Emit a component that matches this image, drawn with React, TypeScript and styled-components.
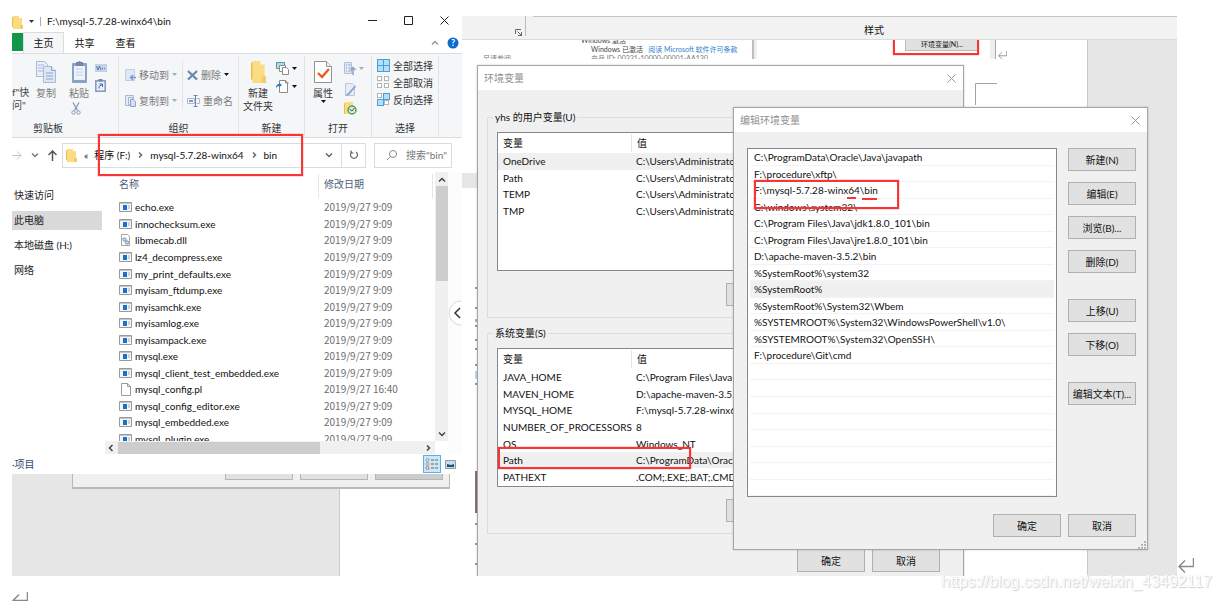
import React from "react";
import styled, { createGlobalStyle } from "styled-components";

const GlobalStyle = createGlobalStyle`
  * { box-sizing: border-box; }
  body { margin: 0; background: #fff; color: #101010; font: 10px/16px Lato, "Noto Sans CJK SC", sans-serif; overflow: hidden; }
  button, input, table { font: inherit; color: inherit; }
  button { padding: 0; border: 0; background: none; }
  svg { display: block; flex: none; }
`;

/* ---------- page ---------- */
const Page = styled.main`
  position: relative;
  padding: 16px 45px 0 12px;
  min-height: 601px;
`;
const Scenes = styled.div`
  display: flex;
  height: 560px;
`;
const LeftScene = styled.section`
  position: relative;
  flex: none;
  width: 450px;
`;
const RightScene = styled.section`
  position: relative;
  flex: 1;
  min-width: 0;
  overflow: hidden;
  display: flex;
  flex-direction: column;
`;
const Mark = styled.div<{ $x: number; $y: number; $w: number; $h: number }>`
  position: absolute;
  z-index: 5;
  left: ${(p) => p.$x}px;
  top: ${(p) => p.$y}px;
  width: ${(p) => p.$w}px;
  height: ${(p) => p.$h}px;
  border: 2px solid #f93434;
  box-shadow: 0 0 1px #f93434;
  pointer-events: none;
`;
const Pinned = styled.div<{ $x: number; $y: number }>`
  position: absolute;
  left: ${(p) => p.$x}px;
  top: ${(p) => p.$y}px;
`;
const Watermark = styled.div`
  position: absolute;
  z-index: 9;
  right: 10px;
  top: 572px;
  font: 16px/20px "Liberation Sans", sans-serif;
  color: #fff;
  text-shadow: 1px 1px 1px #d0d0d0, 0 0 1px #d8d8d8;
  white-space: nowrap;
`;

/* ---------- explorer ---------- */
const Explorer = styled.div`
  height: 458px;
  background: #fff;
  display: flex;
  flex-direction: column;
  overflow: hidden;
`;
const TitleBar = styled.header`
  display: flex;
  align-items: flex-start;
  height: 17px;
  line-height: 10px;
`;
const Gap = styled.span`
  flex: none;
  width: 8px;
`;
const QuickAccess = styled.div`
  display: flex;
  align-items: center;
  gap: 6px;
  height: 10px;
  padding: 0 6px;
`;
const TitleText = styled.h1`
  flex: 1;
  margin: 0;
  font: inherit;
`;
const WindowButton = styled.button`
  width: 36px;
  height: 10px;
  display: flex;
  justify-content: center;
`;
const Tabs = styled.nav`
  display: flex;
  align-items: center;
  height: 21px;
  border-bottom: 1px solid #dcdde0;
`;
const FileTab = styled.button`
  width: 11px;
  height: 18px;
  align-self: flex-start;
  background: #12974a;
`;
const Tab = styled.button<{ $active?: boolean }>`
  width: 41px;
  height: 21px;
  line-height: 18px;
  ${(p) => p.$active && "background:#f5f6f7;border:1px solid #dcdde0;border-bottom:0;"}
`;
const TabEnd = styled.div`
  margin-left: auto;
  margin-right: 3px;
  display: flex;
  align-items: center;
  gap: 8px;
`;
const Ribbon = styled.div`
  display: flex;
  height: 85px;
  background: #f5f6f7;
  border-bottom: 1px solid #dcdde0;
  color: #333;
`;
const Group = styled.section<{ $w: number }>`
  width: ${(p) => p.$w}px;
  margin: 2px 0 0;
  border-right: 1px solid #e2e3e5;
  display: flex;
  flex-direction: column;
  overflow: hidden;
`;
const GroupBody = styled.div<{ $pl?: number; $pt?: number; $gap?: number }>`
  flex: 1;
  display: flex;
  padding: ${(p) => p.$pt ?? 5}px 0 0 ${(p) => p.$pl ?? 0}px;
  gap: ${(p) => p.$gap ?? 0}px;
`;
const GroupLabel = styled.div<{ $pr?: number }>`
  height: 18px;
  line-height: 18px;
  padding-right: ${(p) => p.$pr ?? 0}px;
  text-align: center;
`;
const BigButton = styled.button<{ $w?: number; $dim?: boolean }>`
  width: ${(p) => p.$w ?? 30}px;
  display: flex;
  flex-direction: column;
  align-items: center;
  align-self: flex-start;
  line-height: 13px;
  white-space: pre;
  color: ${(p) => (p.$dim ? "#7a7a7a" : "#333")};
  svg:first-child { margin-bottom: 4px; }
`;
const Stack = styled.div<{ $gap: number; $pt?: number; $line?: boolean }>`
  display: flex;
  flex-direction: column;
  align-self: flex-start;
  gap: ${(p) => p.$gap}px;
  padding-top: ${(p) => p.$pt ?? 0}px;
  ${(p) => p.$line && "border-right:1px solid #e2e3e5;padding-right:5px;"}
`;
const SmallButton = styled.button<{ $dim?: boolean }>`
  display: flex;
  align-items: center;
  gap: 3px;
  height: 16px;
  line-height: 16px;
  color: ${(p) => (p.$dim ? "#7a7a7a" : "#333")};
`;
const Cut = styled.div`
  padding-left: 8px;
`;
const QuickPin = styled.div`
  width: 17px;
  padding-top: 25px;
  line-height: 13px;
  white-space: nowrap;
  color: #444;
`;
const AddressRow = styled.div`
  display: flex;
  align-items: center;
  height: 34px;
  padding-right: 10px;
`;
const NavButtons = styled.div`
  width: 50px;
  display: flex;
  align-items: center;
  gap: 9px;
`;
const AddressBox = styled.div`
  width: 304px;
  height: 25px;
  border: 1px solid #dcdcdc;
  display: flex;
  align-items: center;
  padding-left: 3px;
`;
const Crumbs = styled.div`
  flex: 1;
  display: flex;
  gap: 6px;
  align-items: center;
  padding-left: 7px;
  white-space: nowrap;
`;
const Refresh = styled.button`
  width: 24px;
  height: 23px;
  display: grid;
  place-items: center;
  border-left: 1px solid #dcdcdc;
`;
const SearchBox = styled.label`
  margin-left: auto;
  width: 78px;
  height: 25px;
  border: 1px solid #dcdcdc;
  display: flex;
  align-items: center;
  gap: 9px;
  padding-left: 12px;
  input { width: 46px; border: 0; padding: 0; outline: 0; background: none; }
  input::placeholder { color: #777; opacity: 1; }
`;
const ExplorerBody = styled.div`
  display: flex;
  height: 282px;
`;
const Sidebar = styled.nav`
  width: 90px;
  padding-top: 14px;
  display: flex;
  flex-direction: column;
  gap: 6px;
`;
const SideLink = styled.a<{ $on?: boolean }>`
  height: 19px;
  line-height: 18px;
  padding-left: 2px;
  color: #222;
  text-decoration: none;
  background: ${(p) => (p.$on ? "#d9d9d9" : "transparent")};
`;
const FilePane = styled.div`
  width: 346px;
  padding-left: 3px;
  display: flex;
  flex-direction: column;
`;
const FileArea = styled.div`
  display: flex;
  height: 269px;
`;
const FileTable = styled.table`
  flex: 1;
  display: block;
  height: 269px;
  overflow: hidden;
  thead, tbody { display: flex; flex-direction: column; }
  tr { display: flex; flex: 1; align-items: center; padding-left: 14px; }
  thead { height: 27px; color: #4c607a; }
  th { font-weight: normal; text-align: left; padding: 0; height: 24px; line-height: 20px; }
  tbody { height: 248px; }
  td { padding: 0; display: flex; align-items: center; gap: 3px; white-space: nowrap; }
  th:first-child, td:first-child { width: 199px; }
  th + th { border-left: 1px solid #e5e5e5; border-right: 1px solid #e5e5e5; width: 115px; padding-left: 5px; }
  td + td { padding-left: 6px; color: #6d6d6d; font-family: "Noto Sans CJK SC", sans-serif; }
`;
const VScroll = styled.div`
  width: 13px;
  padding: 4px 0 3px;
  background: #f0f0f0;
  display: flex;
  flex-direction: column;
  align-items: center;
`;
const VThumb = styled.div`
  width: 12px;
  height: 95px;
  margin: 2px 0 auto;
  background: #cdcdcd;
`;
const HScroll = styled.div`
  width: 330px;
  height: 13px;
  background: #f0f0f0;
  display: flex;
  align-items: center;
  padding: 0 3px 0 2px;
`;
const HThumb = styled.div`
  width: 202px;
  height: 12px;
  margin: 0 auto 0 3px;
  background: #cdcdcd;
`;
const SideStrip = styled.div`
  flex: 1;
  display: flex;
  align-items: center;
  background: #fcfcfc;
  overflow: hidden;
`;
const StatusBar = styled.footer`
  height: 20px;
  padding-right: 3px;
  display: flex;
  align-items: center;
  color: #33496b;
  span { flex: 1; line-height: 18px; }
`;
const ViewButton = styled.button<{ $on?: boolean }>`
  width: 18px;
  height: 18px;
  display: grid;
  place-items: center;
  ${(p) => p.$on && "background:#cce8f6;border:1px solid #58b4df;"}
`;
const Backdrop = styled.div`
  position: relative;
  width: 328px;
  height: 102px;
  background: #e6e6e6;
  border-right: 1px solid #c9c9c9;
`;
const DialogEdge = styled.div`
  position: absolute;
  left: 60px;
  top: 0;
  width: 378px;
  height: 15px;
  background: #f0f0f0;
  border: solid #b9b9b9;
  border-width: 0 1px 2px;
  display: flex;
  justify-content: flex-end;
  gap: 7px;
  padding-right: 6px;
`;
const ButtonEdge = styled.div<{ $on?: boolean }>`
  width: 68px;
  height: 6px;
  background: ${(p) => (p.$on ? "#cccccc" : "#e1e1e1")};
  border: solid #b5b5b5;
  border-width: 0 1px 1px;
`;

/* ---------- document behind the dialogs ---------- */
const StyleStrip = styled.div`
  flex: none;
  height: 24px;
  background: #f2f2f2;
  border-bottom: 1px solid #dadada;
  display: flex;
`;
const StripLeft = styled.div`
  width: 64px;
  height: 20px;
  border-right: 1px solid #bdbdbd;
  display: flex;
  align-items: flex-end;
  justify-content: flex-end;
  padding-right: 3px;
`;
const StripMain = styled.div`
  flex: 1;
  margin-left: 7px;
  padding-left: 331px;
  padding-top: 3px;
  line-height: 20px;
  border-top: 1px solid #c6c6c6;
`;
const DocArea = styled.div`
  position: relative;
  flex: 1;
  overflow: hidden;
  background: linear-gradient(#e6e6e6, #e6e6e6) right / 90px 100% no-repeat #fff;
`;
const DocEdge = styled.div`
  height: 100%;
  margin-right: 89px;
  border-right: 1px solid #c9c9c9;
`;
const TinyLine = styled(Pinned)`
  height: 8px;
  font-size: 7px;
  line-height: 8px;
  white-space: pre;
  color: #444;
  a { color: #2f7fd0; text-decoration: none; }
`;
const PartLine = styled(TinyLine)`
  height: 5px;
  overflow: hidden;
  color: #777;
`;
const TinyButton = styled.button`
  position: absolute;
  left: 443px;
  top: -4px;
  width: 74px;
  height: 15px;
  background: #e1e1e1;
  border: 1px solid #bbb;
  font-size: 7px;
  line-height: 15px;
`;
const Bar = styled.div<{ $x: number; $y: number; $w: number; $h: number; $c: string }>`
  position: absolute;
  left: ${(p) => p.$x}px;
  top: ${(p) => p.$y}px;
  width: ${(p) => p.$w}px;
  height: ${(p) => p.$h}px;
  background: ${(p) => p.$c};
`;
const Underline = styled(Bar)`
  z-index: 5;
`;

/* ---------- dialogs ---------- */
const Dialog = styled.div<{ $x: number; $y: number; $w: number; $h: number }>`
  position: absolute;
  left: ${(p) => p.$x}px;
  top: ${(p) => p.$y}px;
  width: ${(p) => p.$w}px;
  height: ${(p) => p.$h}px;
  background: #f0f0f0;
  border: 1px solid #a5a5a5;
  box-shadow: 0 0 2px rgba(0, 0, 0, 0.2);
`;
const DialogTitle = styled.header`
  height: 24px;
  padding: 0 7px 0 6px;
  display: flex;
  align-items: center;
  justify-content: space-between;
  line-height: 20px;
  background: #fff;
  color: #8f8f8f;
`;
const PushButton = styled.button`
  flex: none;
  width: 68px;
  height: 23px;
  border: 1px solid #b0b0b0;
  background: #e1e1e1;
  color: #111;
  line-height: 20px;
`;
const EnvBody = styled.div`
  padding: 19px 9px 0;
  display: flex;
  flex-direction: column;
  gap: 7px;
`;
const VarGroup = styled.fieldset`
  margin: 0;
  height: 209px;
  padding: 7px 9px 0;
  border: 1px solid #dcdcdc;
  min-width: 0;
  display: flex;
  flex-direction: column;
  legend { margin-left: -4px; padding: 0 2px; line-height: 16px; }
`;
const VarTable = styled.table`
  display: block;
  flex: none;
  height: 139px;
  background: #fff;
  border: 1px solid #828790;
  thead, tbody { display: flex; flex-direction: column; }
  tr { display: flex; flex: 1; align-items: center; }
  thead { height: 20px; }
  th, td { padding: 0 0 0 5px; text-align: left; font-weight: normal; white-space: nowrap; }
  th { line-height: 18px; }
  th:first-child, td:first-child { width: 133px; }
  th + th { border-left: 1px solid #e5e5e5; }
`;
const VarBody = styled.tbody<{ $h: number }>`
  height: ${(p) => p.$h}px;
`;
const VarRow = styled.tr<{ $on?: boolean }>`
  background: ${(p) => (p.$on ? "#f0f0f0" : "transparent")};
`;
const GroupButtons = styled.div`
  display: flex;
  justify-content: flex-end;
  padding: 12px 150px 0 0;
`;
const DialogActions = styled.div`
  display: flex;
  justify-content: flex-end;
  gap: 7px;
  padding: 8px 14px 0 0;
`;
const EditActions = styled(DialogActions)`
  padding: 0 11px 0 0;
`;
const EditBody = styled.div`
  height: 382px;
  padding: 16px 11px 0 13px;
  display: flex;
  gap: 11px;
`;
const PathList = styled.ul`
  flex: 1;
  height: 349px;
  margin: 0;
  padding: 0;
  list-style: none;
  background: #fff;
  border: 1px solid #828790;
  overflow: hidden;
  display: flex;
  flex-direction: column;
`;
const PathRow = styled.li<{ $on?: boolean }>`
  flex: 1;
  min-height: 0;
  margin: 0 2px;
  padding-left: 4px;
  border-bottom: 1px solid #f3f3f3;
  background: ${(p) => (p.$on ? "#f0f0f0" : "transparent")};
`;
const SideButtons = styled.div`
  display: flex;
  flex-direction: column;
  gap: 11px;
  ${PushButton}:nth-child(5), ${PushButton}:nth-child(7) { margin-top: 15px; }
`;

/* ---------- icons ---------- */
const Folder = ({ w = 11, h = 13 }: { w?: number; h?: number }) => (
  <svg width={w} height={h} viewBox="0 0 11 13" preserveAspectRatio="none">
    <path d="M0 1h6v10H0z" fill="#e8bd4e" />
    <path d="M1 0h6v2h3v11H1z" fill="#fbdc82" />
    <path d="M8 9h3v4H8z" fill="#f3cd65" />
  </svg>
);
const Caret = ({ c = "#333" }: { c?: string }) => (
  <svg width="5" height="3"><path d="M0 0h5L2.5 3z" fill={c} /></svg>
);
const Close = ({ c = "#999" }: { c?: string }) => (
  <svg width="9" height="9"><path d="M.5.5l8 8M8.5.5l-8 8" stroke={c} fill="none" /></svg>
);
const Chevron = ({ d, c = "#444" }: { d: "up" | "down" | "left" | "right"; c?: string }) => {
  const paths = { up: "M1 5.500l3-3 3 3", down: "M1 2.500l3 3 3-3", left: "M5.500 1l-3 3 3 3", right: "M3 1.500l2.500 2.500-2.500 2.500" };
  return <svg width="8" height="8"><path d={paths[d]} fill="none" stroke={c} strokeWidth="1.500" /></svg>;
};
const CopyIcon = () => (
  <svg width="22" height="22" stroke="#a9b9d6" fill="#e9eff9">
    <path d="M1.500.5h8l3 3v12h-11z" /><path d="M3 4h6M3 7h7M3 10h7" />
    <path d="M8.500 5.500h8l4 4v12h-12z" fill="#dce6f5" /><path d="M16.500 5.500v4h4M11 12h7M11 15h7M11 18h7" stroke="#8ea4cb" />
  </svg>
);
const CopyToIcon = () => (
  <svg width="11" height="12" fill="#e3ebf7" stroke="#a9b9d6"><path d="M.5.5h8v10h-8z" /><path d="M3.500 2.500h4v7h-4z" /><path d="M5.500 4.500h3l2 2v5h-5z" fill="#d5e0f1" stroke="#8ea4cb" /></svg>
);
const PasteIcon = () => (
  <svg width="17" height="22"><rect x="1" y="2" width="15" height="20" rx="1" fill="#8ba1c6" /><path d="M3 5h11v14H3z" fill="#eef3fb" /><path d="M5 8h7M5 11h7M5 14h7" stroke="#c5d2e8" /><path d="M5 1h2q1.500-2 3 0h2v4H5z" fill="#7187ae" /></svg>
);
const ScissorsIcon = () => (
  <svg width="10" height="13" fill="none" stroke="#8298bf"><path d="M2 .5l4.500 8M8 .5l-4.500 8" strokeWidth="1.300" /><circle cx="2.500" cy="10.500" r="1.700" /><circle cx="7.500" cy="10.500" r="1.700" /></svg>
);
const PathIcon = () => (
  <svg width="12" height="8"><rect width="12" height="8" fill="#c3d0e6" /><path d="M1.500 2l1.500 4 1.500-4 1.500 4M7 4.500h1M9 4.500h1" stroke="#5f7caf" fill="none" /></svg>
);
const ShortcutIcon = () => (
  <svg width="11" height="13"><rect x=".8" y="1.800" width="9.400" height="10.400" fill="#eaf0fa" stroke="#8298bf" strokeWidth="1.500" /><path d="M3.500 0h4v2.500h-4z" fill="#7187ae" /><path d="M4 9.500V7.500L7 5.500M4.500 5h3v3" stroke="#3e66a8" fill="none" /></svg>
);
const MoveIcon = () => (
  <svg width="11" height="12"><path d="M.5.5h9v11h-9z" fill="#dfe8f5" stroke="#c0cde2" /><path d="M11 8.500H5M8 6L5.500 8.500 8 11" stroke="#7f9ac8" strokeWidth="1.500" fill="none" /></svg>
);
const DeleteIcon = () => (
  <svg width="11" height="10"><path d="M1 1l9 8.500M10 1L1 9.500" stroke="#6784b5" strokeWidth="2.200" /></svg>
);
const RenameIcon = () => (
  <svg width="13" height="12" fill="none"><path d="M.5 3.500h7v5h-7zM9.500 3.500h3v5h-3" stroke="#a9b9d6" /><path d="M2 6h4" stroke="#7f9ac8" strokeWidth="2" /><path d="M6.500.5h4M8.500.5v11M6.500 11.500h4" stroke="#6c86b3" /></svg>
);
const NewItemIcon = () => (
  <svg width="13" height="13"><path d="M.5.5h8v6h-8z" fill="#b7dbe6" stroke="#5795a8" /><path d="M3.500 3.500h6v6h-6z" fill="#fff" stroke="#8c8c8c" /><path d="M6.500 5.500h4l2 2v5h-6z" fill="#fff" stroke="#8c8c8c" /></svg>
);
const EasyIcon = () => (
  <svg width="13" height="13"><path d="M3.500.5h6l2 2v10h-8z" fill="#fff" stroke="#8c8c8c" /><path d="M9.500 0v3h3" stroke="#8c8c8c" fill="none" /><path d="M0 8q0-4 3-4V2.500L6 5 3 7.500V6Q1.500 6 0 8z" fill="#2d7fc4" /></svg>
);
const PropertiesIcon = () => (
  <svg width="18" height="22"><path d="M.5.5h12l5 5v16H.5z" fill="#fff" stroke="#929292" /><path d="M12.500.5v5h5" fill="#eee" stroke="#929292" /><path d="M4 12l4 4 7-8" stroke="#ee5a1c" strokeWidth="2.400" fill="none" /></svg>
);
const OpenIcon = () => (
  <svg width="12" height="13"><path d="M.5.5h7v11h-7z" fill="#e2e9f5" stroke="#afbed9" /><path d="M2 3h1M2 6h1M2 9h1M4.500 3h2M4.500 6h2M4.500 9h2" stroke="#7f9ac8" /><path d="M9 13V6M6.500 8L9 5.500 11.500 8" stroke="#8ba1c6" strokeWidth="1.500" fill="none" /></svg>
);
const EditIcon = () => (
  <svg width="12" height="13"><path d="M1.500.5h7l2 2v10h-9z" fill="#e6edf8" stroke="#b9c7df" /><path d="M11.500 3l-7 8-2 1" stroke="#8ba1c6" strokeWidth="1.800" fill="none" /></svg>
);
const HistoryIcon = () => (
  <svg width="13" height="13"><path d="M0 1h4v11H0z" fill="#e8bd4e" /><path d="M1 0h8v12H1z" fill="#fbdc82" /><circle cx="8" cy="8" r="4" fill="#d5ead6" stroke="#55a25c" strokeWidth="1.500" /><path d="M5.500 7L8 9l2.500-3" stroke="#555" fill="none" /></svg>
);
const GridIcon = ({ on }: { on: boolean[] }) => (
  <svg width="13" height="13">
    {on.map((v, i) => (
      <rect key={i} x={(i % 2) * (v ? 6 : 7) + 0.5} y={Math.floor(i / 2) * (v ? 6 : 7) + 0.5} width={v ? 6 : 4} height={v ? 6 : 4} fill={v ? "#b4dff9" : "#fff"} stroke={v ? "#4a9ed9" : "#b3b3b3"} />
    ))}
  </svg>
);
const ExeIcon = () => (
  <svg width="13" height="10"><path d="M.5.5h12v9H.5z" fill="#f6f6f6" stroke="#9a9a9a" /><path d="M1 1h11v1H1z" fill="#c4c4c4" /><path d="M4 3h4v5H4z" fill="#1273d0" /><path d="M9 4h2M9 6h2" stroke="#9fb4cc" /></svg>
);
const DllIcon = () => (
  <svg width="13" height="12"><path d="M2.500.5h6l2 2v9h-8z" fill="#fff" stroke="#a5a5a5" /><circle cx="5.500" cy="5.500" r="1.700" fill="#ccd9e6" stroke="#7d94ab" /><circle cx="8" cy="8.500" r="1.700" fill="#ccd9e6" stroke="#7d94ab" /></svg>
);
const FileIcon = () => (
  <svg width="13" height="13"><path d="M2.500.5h6l3 3v9h-9z" fill="#fff" stroke="#9a9a9a" /><path d="M8.500.5v3h3" fill="none" stroke="#9a9a9a" /></svg>
);
const ReturnMark = ({ s = 16 }: { s?: number }) => (
  <svg width={s} height={s} viewBox="0 0 16 16"><path d="M15.500 0v8.500H1M7 2.500l-6 6 6 6" fill="none" stroke="#8a8a8a" strokeWidth="1.500" /></svg>
);

/* ---------- data ---------- */
const files = [
  "echo.exe", "innochecksum.exe", "libmecab.dll", "lz4_decompress.exe", "my_print_defaults.exe",
  "myisam_ftdump.exe", "myisamchk.exe", "myisamlog.exe", "myisampack.exe", "mysql.exe",
  "mysql_client_test_embedded.exe", "mysql_config.pl", "mysql_config_editor.exe", "mysql_embedded.exe", "mysql_plugin.exe",
];
const userVars = [["OneDrive", "C:\\Users\\Administrator"], ["Path", "C:\\Users\\Administrator"], ["TEMP", "C:\\Users\\Administrator"], ["TMP", "C:\\Users\\Administrator"]];
const systemVars = [
  ["JAVA_HOME", "C:\\Program Files\\Java"], ["MAVEN_HOME", "D:\\apache-maven-3.5.2"], ["MYSQL_HOME", "F:\\mysql-5.7.28-winx64"],
  ["NUMBER_OF_PROCESSORS", "8"], ["OS", "Windows_NT"], ["Path", "C:\\ProgramData\\Oracle"], ["PATHEXT", ".COM;.EXE;.BAT;.CMD"],
];
const paths = [
  "C:\\ProgramData\\Oracle\\Java\\javapath", "F:\\procedure\\xftp\\", "F:\\mysql-5.7.28-winx64\\bin", "C:\\windows\\system32\\",
  "C:\\Program Files\\Java\\jdk1.8.0_101\\bin", "C:\\Program Files\\Java\\jre1.8.0_101\\bin", "D:\\apache-maven-3.5.2\\bin",
  "%SystemRoot%\\system32", "%SystemRoot%", "%SystemRoot%\\System32\\Wbem", "%SYSTEMROOT%\\System32\\WindowsPowerShell\\v1.0\\",
  "%SYSTEMROOT%\\System32\\OpenSSH\\", "F:\\procedure\\Git\\cmd", "", "", "", "", "", "", "", "",
];
const paragraphTicks = [247, 267, 285, 299, 308, 324, 343, 483, 503, 523];

const fileIcon = (name: string) => (name.endsWith(".exe") ? <ExeIcon /> : name.endsWith(".dll") ? <DllIcon /> : <FileIcon />);

function Variables({ title, rows, selected, bodyHeight }: { title: string; rows: string[][]; selected: number; bodyHeight: number }) {
  return (
    <VarGroup>
      <legend>{title}</legend>
      <VarTable>
        <thead><tr><th>变量</th><th>值</th></tr></thead>
        <VarBody $h={bodyHeight}>
          {rows.map(([k, v], i) => <VarRow key={k} $on={i === selected}><td>{k}</td><td>{v}</td></VarRow>)}
        </VarBody>
      </VarTable>
      <GroupButtons><PushButton aria-label="新建" /></GroupButtons>
    </VarGroup>
  );
}

function ExplorerWindow() {
  return (
    <Explorer>
      <TitleBar>
        <Folder />
        <QuickAccess><Caret /><svg width="1" height="9"><path d="M0 0h1v9H0z" fill="#aaa" /></svg></QuickAccess>
        <TitleText>F:\mysql-5.7.28-winx64\bin</TitleText>
        <WindowButton aria-label="最小化"><svg width="9" height="9"><path d="M0 4.500h9" stroke="#222" /></svg></WindowButton>
        <WindowButton aria-label="最大化"><svg width="9" height="9"><path d="M.5.5h8v8h-8z" stroke="#222" fill="none" /></svg></WindowButton>
        <WindowButton aria-label="关闭"><Close c="#222" /></WindowButton>
      </TitleBar>
      <Tabs>
        <FileTab aria-label="文件" /><Tab $active>主页</Tab><Tab>共享</Tab><Tab>查看</Tab>
        <TabEnd>
          <Chevron d="up" c="#999" />
          <svg width="12" height="12"><circle cx="6" cy="6" r="5.500" fill="#0a6ccc" /><text x="6" y="9" textAnchor="middle" fontSize="9" fontWeight="bold" fill="#fff">?</text></svg>
        </TabEnd>
      </Tabs>
      <Ribbon>
        <Group $w={107}>
          <GroupBody>
            <QuickPin>f"快<br />问"</QuickPin>
            <BigButton $w={34} $dim><CopyIcon />复制</BigButton>
            <Stack $gap={2}><BigButton $w={32} $dim><PasteIcon />粘贴</BigButton><Cut><ScissorsIcon /></Cut></Stack>
            <Stack $gap={7} $pt={3}><PathIcon /><ShortcutIcon /></Stack>
          </GroupBody>
          <GroupLabel $pr={34}>剪贴板</GroupLabel>
        </Group>
        <Group $w={120}>
          <GroupBody $pl={6} $gap={4}>
            <Stack $gap={10} $pt={6} $line>
              <SmallButton $dim><MoveIcon />移动到 <Caret c="#aaa" /></SmallButton>
              <SmallButton $dim><CopyToIcon />复制到 <Caret c="#aaa" /></SmallButton>
            </Stack>
            <Stack $gap={10} $pt={6}>
              <SmallButton $dim><DeleteIcon />删除 <Caret c="#111" /></SmallButton>
              <SmallButton $dim><RenameIcon />重命名</SmallButton>
            </Stack>
          </GroupBody>
          <GroupLabel>组织</GroupLabel>
        </Group>
        <Group $w={66}>
          <GroupBody $pl={1}>
            <BigButton $w={36}><Folder w={15} h={22} />{"新建\n文件夹"}</BigButton>
            <Stack $gap={2}>
              <SmallButton aria-label="新建项目"><NewItemIcon /><Caret c="#111" /></SmallButton>
              <SmallButton aria-label="轻松访问"><EasyIcon /><Caret c="#111" /></SmallButton>
            </Stack>
          </GroupBody>
          <GroupLabel>新建</GroupLabel>
        </Group>
        <Group $w={67}>
          <GroupBody $pl={1} $gap={4}>
            <BigButton $w={34}><PropertiesIcon />属性<Caret c="#111" /></BigButton>
            <Stack $gap={6}>
              <SmallButton aria-label="打开"><OpenIcon /><Caret c="#aaa" /></SmallButton>
              <EditIcon /><HistoryIcon />
            </Stack>
          </GroupBody>
          <GroupLabel>打开</GroupLabel>
        </Group>
        <Group $w={67}>
          <GroupBody $pl={5} $pt={2}>
            <Stack $gap={1}>
              <SmallButton><GridIcon on={[true, true, true, true]} />全部选择</SmallButton>
              <SmallButton><GridIcon on={[false, false, false, false]} />全部取消</SmallButton>
              <SmallButton><GridIcon on={[false, true, true, false]} />反向选择</SmallButton>
            </Stack>
          </GroupBody>
          <GroupLabel>选择</GroupLabel>
        </Group>
      </Ribbon>
      <AddressRow>
        <NavButtons>
          <svg width="10" height="9"><path d="M0 4.500h9M5 .5l4 4-4 4" stroke="#c4c4c4" fill="none" /></svg>
          <Chevron d="down" c="#777" />
          <svg width="9" height="11"><path d="M4.500 11V1M.5 5l4-4 4 4" stroke="#555" strokeWidth="1.500" fill="none" /></svg>
        </NavButtons>
        <AddressBox>
          <Folder />
          <Crumbs><span>«</span><span>程序 (F:)</span><Chevron d="right" c="#666" /><span>mysql-5.7.28-winx64</span><Chevron d="right" c="#666" /><span>bin</span></Crumbs>
          <Chevron d="down" c="#666" /><Gap />
          <Refresh aria-label="刷新"><svg width="10" height="10"><path d="M3 2a3.500 3.500 0 1 0 4 0M2 .5v2.500h2.500" stroke="#666" strokeWidth="1.200" fill="none" /></svg></Refresh>
        </AddressBox>
        <SearchBox>
          <svg width="10" height="10"><circle cx="6" cy="4" r="3.500" stroke="#888" fill="none" /><path d="M3.500 6.500L0 10" stroke="#888" /></svg>
          <input aria-label="搜索" placeholder={'搜索"bin"'} />
        </SearchBox>
      </AddressRow>
      <ExplorerBody>
        <Sidebar>
          <SideLink href="#quick">快速访问</SideLink>
          <SideLink href="#pc" $on>此电脑</SideLink>
          <SideLink href="#disk">本地磁盘 (H:)</SideLink>
          <SideLink href="#net">网络</SideLink>
        </Sidebar>
        <FilePane>
          <FileArea>
            <FileTable>
              <thead><tr><th>名称</th><th>修改日期</th></tr></thead>
              <tbody>
                {files.map((f) => <tr key={f}><td>{fileIcon(f)}{f}</td><td>2019/9/27 {f.endsWith(".pl") ? "16:40" : "9:09"}</td></tr>)}
              </tbody>
            </FileTable>
            <VScroll><Chevron d="up" /><VThumb /><Chevron d="down" /></VScroll>
          </FileArea>
          <HScroll><Chevron d="left" /><HThumb /><Chevron d="right" /></HScroll>
        </FilePane>
        <SideStrip>
          <svg width="13" height="26"><circle cx="13" cy="13" r="12" fill="#fff" stroke="#cfdae8" /><path d="M12 8l-5 5 5 5" stroke="#333" strokeWidth="1.500" fill="none" /></svg>
        </SideStrip>
      </ExplorerBody>
      <StatusBar>
        <span>·项目</span>
        <ViewButton $on aria-label="详细信息"><svg width="14" height="12" fill="none"><circle cx="2.500" cy="2" r="1.500" stroke="#999" /><circle cx="2.500" cy="6" r="1.500" stroke="#999" /><circle cx="2.500" cy="10" r="1.500" stroke="#d66" /><path d="M6 2h3M10 2h3M6 6h3M10 6h3M6 10h3M10 10h3" stroke="#666" /></svg></ViewButton>
        <ViewButton aria-label="大图标"><svg width="11" height="9"><path d="M.5.5h10v8H.5z" fill="#bfe0f7" stroke="#999" /><path d="M2 4l4 1 3-1v3H2z" fill="#28506f" /></svg></ViewButton>
      </StatusBar>
    </Explorer>
  );
}

export default function App() {
  return (
    <Page>
      <GlobalStyle />
      <Scenes>
        <LeftScene>
          <ExplorerWindow />
          <Backdrop><DialogEdge><ButtonEdge /><ButtonEdge /><ButtonEdge $on /></DialogEdge></Backdrop>
          <Mark $x={86} $y={118} $w={205} $h={42} />
        </LeftScene>
        <RightScene>
          <StyleStrip>
            <StripLeft><svg width="7" height="7" fill="none" stroke="#666"><path d="M.5 5V.5H6M2.500 2.500l4 4M6.500 3v3.500H3" /></svg></StripLeft>
            <StripMain>样式</StripMain>
          </StyleStrip>
          <DocArea>
            <DocEdge />
            <TinyLine $x={119} $y={-4}>Windows 激活</TinyLine>
            <TinyLine $x={129} $y={5}>Windows 已激活   <a href="#terms">阅读 Microsoft 软件许可条款</a></TinyLine>
            <PartLine $x={129} $y={14}>产品 ID: 00331-10000-00001-AA130</PartLine>
            <PartLine $x={21} $y={14}>另请参阅</PartLine>
            <Bar $x={290} $y={0} $w={2} $h={19} $c="#bdbdbd" /><Bar $x={292} $y={0} $w={3} $h={19} $c="#eee" />
            <TinyButton>环境变量(N)...</TinyButton>
            <Mark $x={431} $y={-6} $w={86} $h={21} />
            <Bar $x={528} $y={0} $w={5} $h={19} $c="#eee" /><Bar $x={533} $y={0} $w={1} $h={19} $c="#aaa" />
            <Pinned $x={536} $y={11}><ReturnMark s={9} /></Pinned>
            <Pinned $x={513} $y={43}><svg width="22" height="22"><path d="M.5 22V.5H22" fill="none" stroke="#a5a5a5" /></svg></Pinned>
            <Bar $x={0} $y={133} $w={16} $h={15} $c="#e6e6e6" />
            {paragraphTicks.map((y) => <Bar key={y} $x={13} $y={y} $w={2} $h={2} $c="#999" />)}
            <Bar $x={13} $y={279} $w={2} $h={3} $c="#8db8ea" />
            <Bar $x={13} $y={331} $w={2} $h={8} $c="#b5d8f5" />
            <Bar $x={13} $y={431} $w={2} $h={42} $c="#8d6f78" />
          </DocArea>
          <Dialog $x={15} $y={49} $w={487} $h={530} role="dialog">
            <DialogTitle>环境变量<Close /></DialogTitle>
            <EnvBody>
              <Variables title="yhs 的用户变量(U)" rows={userVars} selected={0} bodyHeight={66} />
              <Variables title="系统变量(S)" rows={systemVars} selected={5} bodyHeight={116} />
              <DialogActions><PushButton>确定</PushButton><PushButton>取消</PushButton></DialogActions>
            </EnvBody>
          </Dialog>
          <Mark $x={36} $y={431} $w={193} $h={22} />
          <Dialog $x={271} $y={91} $w={415} $h={443} role="dialog">
            <DialogTitle>编辑环境变量<Close /></DialogTitle>
            <EditBody>
              <PathList>
                {paths.map((p, i) => <PathRow key={i} $on={i === 8}>{p}</PathRow>)}
              </PathList>
              <SideButtons>
                <PushButton>新建(N)</PushButton><PushButton>编辑(E)</PushButton><PushButton>浏览(B)...</PushButton><PushButton>删除(D)</PushButton>
                <PushButton>上移(U)</PushButton><PushButton>下移(O)</PushButton><PushButton>编辑文本(T)...</PushButton>
              </SideButtons>
            </EditBody>
            <EditActions><PushButton>确定</PushButton><PushButton>取消</PushButton></EditActions>
            <Pinned $x={404} $y={433}><svg width="8" height="8" fill="#b5b5b5"><path d="M6 0h2v2H6zM3 3h2v2H3zM6 3h2v2H6zM0 6h2v2H0zM3 6h2v2H3zM6 6h2v2H6z" /></svg></Pinned>
          </Dialog>
          <Mark $x={292} $y={164} $w={145} $h={29} />
          <Underline $x={385} $y={181} $w={9} $h={2} $c="#f93434" />
          <Underline $x={400} $y={182} $w={15} $h={2} $c="#f93434" />
        </RightScene>
      </Scenes>
      <Pinned $x={1178} $y={558}><ReturnMark /></Pinned>
      <Pinned $x={12} $y={592}><ReturnMark /></Pinned>
      <Watermark>https://blog.csdn.net/weixin_43492117</Watermark>
    </Page>
  );
}
